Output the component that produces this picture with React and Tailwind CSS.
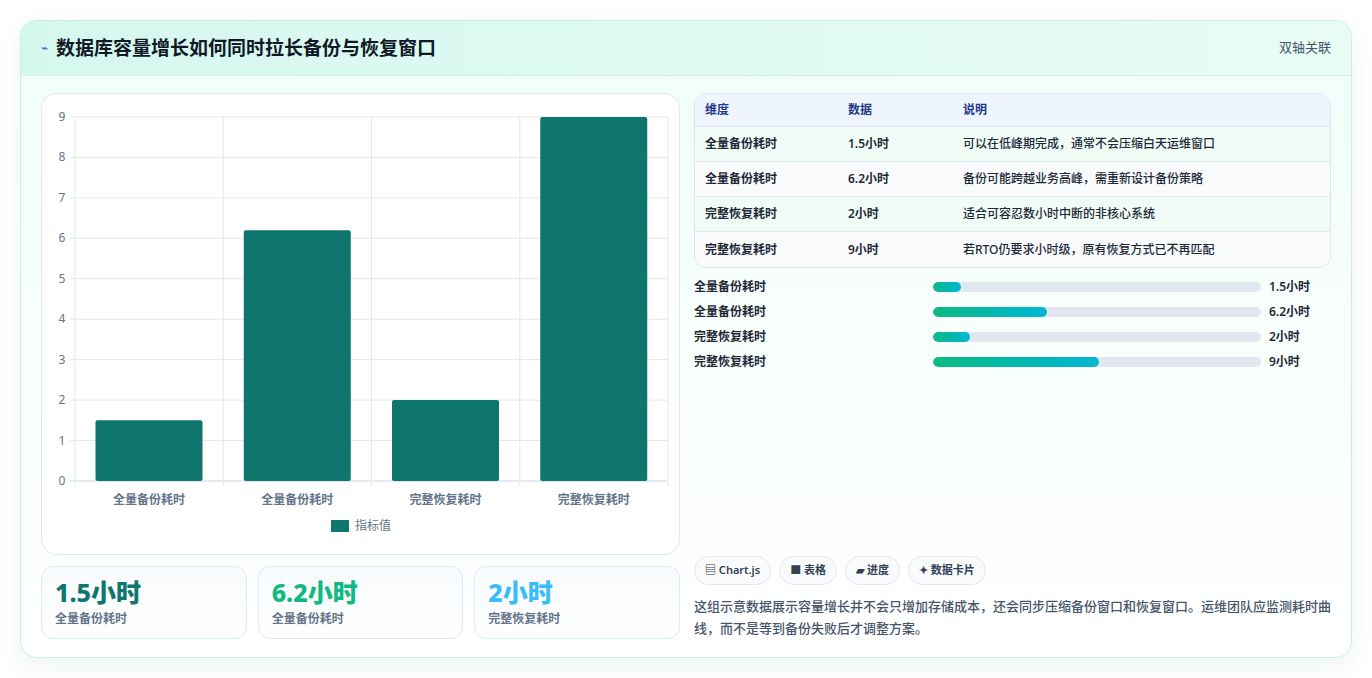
export default function App() {
  const vals = [1.5, 6.2, 2, 9];
  const cats = ["全量备份耗时", "全量备份耗时", "完整恢复耗时", "完整恢复耗时"];
  const descs = ["可以在低峰期完成，通常不会压缩白天运维窗口", "备份可能跨越业务高峰，需重新设计备份策略", "适合可容忍数小时中断的非核心系统", "若RTO仍要求小时级，原有恢复方式已不再匹配"];
  const units = ["1.5小时", "6.2小时", "2小时", "9小时"];
  const x0 = 33, x1 = 626, y0 = 23, y1 = 387;
  const cw = (x1 - x0) / 4;
  const sc = (y1 - y0) / 9;
  const font = { fontFamily: '"Noto Sans", "Noto Sans CJK SC", sans-serif' };
  return (
    <div className="w-[1372px] h-[678px] bg-white p-5" style={font}>
      <div className="h-[638px] rounded-2xl border border-[#c9efe4] shadow-[0_8px_24px_rgba(15,118,110,0.08)] bg-gradient-to-b from-[#f0fdf8] to-white overflow-hidden flex flex-col">
        <div className="h-[55px] flex items-center justify-between px-5 bg-gradient-to-r from-[#d5f8ee] to-[#e8fcf5] border-b border-[#d3f1e7]">
          <div className="flex items-center gap-2">
            <span className="text-[#3b5bdb] text-xs">⌁</span>
            <span className="text-[19px] font-bold text-[#111827]">数据库容量增长如何同时拉长备份与恢复窗口</span>
          </div>
          <span className="text-[13px] text-[#475569]">双轴关联</span>
        </div>
        <div className="flex gap-[14px] px-5 pt-[17px]">
          <div className="w-[639px] flex flex-col gap-[11px]">
            <div className="h-[462px] rounded-2xl border border-[#e2e8f0] bg-white">
              <svg width="639" height="460">
                {[0,1,2,3,4,5,6,7,8,9].map(i => (
                  <g key={i}>
                    <line x1={x0 - 5} x2={x1} y1={y1 - i * sc} y2={y1 - i * sc} stroke={i === 0 ? "#cbd5e1" : "#e5e7eb"} />
                    <text x={20} y={y1 - i * sc + 4} fontSize="12" fill="#64748b" textAnchor="middle">{i}</text>
                  </g>
                ))}
                {[0,1,2,3,4].map(i => (
                  <line key={i} x1={x0 + i * cw} x2={x0 + i * cw} y1={y0} y2={y1 + 5} stroke="#e5e7eb" />
                ))}
                {vals.map((v, i) => (
                  <g key={i}>
                    <rect x={x0 + i * cw + 20.5} y={y1 - v * sc} width={107} height={v * sc} rx="2" fill="#0f766e" />
                    <text x={x0 + i * cw + cw / 2} y={410} fontSize="12" fontWeight="600" fill="#64748b" textAnchor="middle">{cats[i]}</text>
                  </g>
                ))}
                <rect x={289} y={426} width={18} height={12} fill="#0f766e" />
                <text x={313} y={436} fontSize="12" fill="#64748b">指标值</text>
              </svg>
            </div>
            <div className="flex gap-[11px]">
              {[["1.5小时","全量备份耗时","text-[#0f766e]"],["6.2小时","全量备份耗时","text-[#10b981]"],["2小时","完整恢复耗时","text-[#38bdf8]"]].map(([a,b,c],i)=>(
                <div key={i} className="flex-1 h-[73px] rounded-xl border border-[#dbeafe] bg-gradient-to-b from-[#f8fafc] to-white px-[13px] pt-[9px]">
                  <div className={`text-[25px] font-extrabold leading-[32px] ${c}`}>{a}</div>
                  <div className="text-[12px] font-semibold text-[#64748b] mt-[2px]">{b}</div>
                </div>
              ))}
            </div>
          </div>
          <div className="w-[640px] flex flex-col h-[546px]">
            <div className="rounded-xl border border-[#dbe4ef] overflow-hidden bg-white text-[12px]">
              <div className="flex h-[33px] items-center bg-[#eef5ff] text-[#1e3a8a] font-semibold border-b border-[#dbe4ef]">
                <div className="w-[153px] pl-[10px]">维度</div>
                <div className="w-[115px]">数据</div>
                <div>说明</div>
              </div>
              {cats.map((c, i) => (
                <div key={i} className={`flex h-[35px] items-center text-[#1f2937] font-semibold ${i % 2 ? "bg-[#f8fafc]" : "bg-[#f0fdf7]"} ${i < 3 ? "border-b border-[#e2e8f0]" : ""}`}>
                  <div className="w-[153px] pl-[10px]">{c}</div>
                  <div className="w-[115px]">{units[i]}</div>
                  <div className="font-medium">{descs[i]}</div>
                </div>
              ))}
            </div>
            <div className="flex flex-col gap-[12px] mt-[12px]">
              {vals.map((v, i) => (
                <div key={i} className="flex items-center h-[13px] text-[12px] font-semibold text-[#1f2937]">
                  <div className="w-[239px]">{cats[i]}</div>
                  <div className="w-[328px] h-[10px] rounded-full bg-[#e2e8f0] overflow-hidden">
                    <div className="h-full rounded-full bg-gradient-to-r from-[#10b981] to-[#06b6d4]" style={{ width: `${(v / 9) * 50.5}%` }} />
                  </div>
                  <div className="ml-[8px]">{units[i]}</div>
                </div>
              ))}
            </div>
            <div className="mt-auto">
              <div className="flex gap-[8px]">
                {["▤ Chart.js", "■ 表格", "▰ 进度", "✦ 数据卡片"].map(t => (
                  <span key={t} className="h-[29px] px-[10px] flex items-center rounded-full border border-[#e5e7eb] bg-[#f8fafc] text-[11px] font-semibold text-[#334155]">{t}</span>
                ))}
              </div>
              <p className="mt-[10px] text-[13px] leading-[22px] text-[#475569] font-medium">这组示意数据展示容量增长并不会只增加存储成本，还会同步压缩备份窗口和恢复窗口。运维团队应监测耗时曲线，而不是等到备份失败后才调整方案。</p>
            </div>
          </div>
        </div>
      </div>
    </div>
  );
}
